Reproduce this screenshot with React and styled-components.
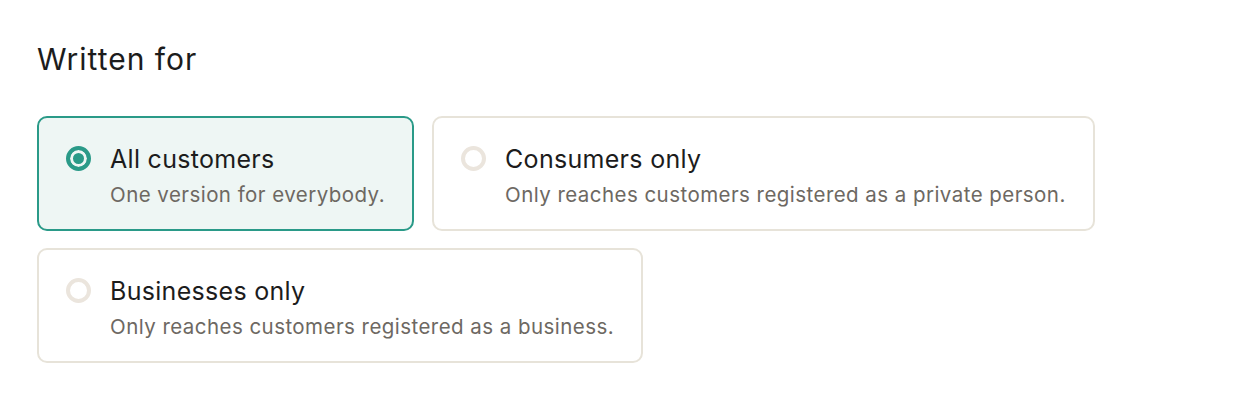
import React, { useState } from 'react'
import styled, { createGlobalStyle } from 'styled-components'

const GlobalStyle = createGlobalStyle`
    body{
        margin:0;
        background:#ffffff;
        font-family: Inter, "Noto Sans", sans-serif;
    }
`

const options = [
    { id: 'all', label: 'All customers', description: 'One version for everybody.' },
    { id: 'consumers', label: 'Consumers only', description: 'Only reaches customers registered as a private person.' },
    { id: 'businesses', label: 'Businesses only', description: 'Only reaches customers registered as a business.' },
]

const OptionCard = ({ label, description, selected, onSelect }) => {
    return (
        <Card $selected={selected} onClick={onSelect}>
            <Radio $selected={selected} />
            <div className="card_text">
                <span className="card_label">{label}</span>
                <span className="card_description">{description}</span>
            </div>
        </Card>
    );
}

const App = () => {
    const [value, setValue] = useState('all');
    return (
        <View>
            <GlobalStyle />
            <h2>Written for</h2>
            <div className="options">
                {options.map((o) => (
                    <OptionCard
                        key={o.id}
                        label={o.label}
                        description={o.description}
                        selected={value === o.id}
                        onSelect={() => setValue(o.id)}
                    />
                ))}
            </div>
        </View>
    );
}

export default App;

const View = styled.div`
    padding:40px 37px;
    h2{
        margin:0 0 38px 0;
        font-size:30px;
        letter-spacing:1px;
        font-weight:400;
        color:#1c1c1c;
        line-height:38px;
    }
    .options{
        display:flex;
        flex-wrap:wrap;
        gap:17px 18px;
        max-width:1080px;
    }
`

const Card = styled.div`
    display:flex;
    align-items:flex-start;
    gap:19px;
    box-sizing:border-box;
    height:115px;
    padding:26px 27px 0 27px;
    border-radius:10px;
    border:2px solid ${(p) => (p.$selected ? '#2a9a88' : '#e7e3d9')};
    background:${(p) => (p.$selected ? '#eef6f4' : '#ffffff')};
    cursor:pointer;

    .card_text{
        display:flex;
        flex-direction:column;
        gap:8px;
    }
    .card_label{
        font-size:25px;
        letter-spacing:0.3px;
        line-height:30px;
        font-weight:400;
        color:#1c1c1c;
    }
    .card_description{
        font-size:20.5px;
        letter-spacing:0.45px;
        line-height:26px;
        color:#6d6862;
    }
`

const Radio = styled.span`
    box-sizing:border-box;
    flex:none;
    width:25px;
    height:25px;
    margin-top:2px;
    border-radius:50%;
    border:${(p) => (p.$selected ? '4px solid #2a9a88' : '4px solid #ebe5dd')};
    background:${(p) => (p.$selected ? '#2a9a88' : '#ffffff')};
    box-shadow:${(p) => (p.$selected ? 'inset 0 0 0 3px #eef6f4' : 'none')};
`
